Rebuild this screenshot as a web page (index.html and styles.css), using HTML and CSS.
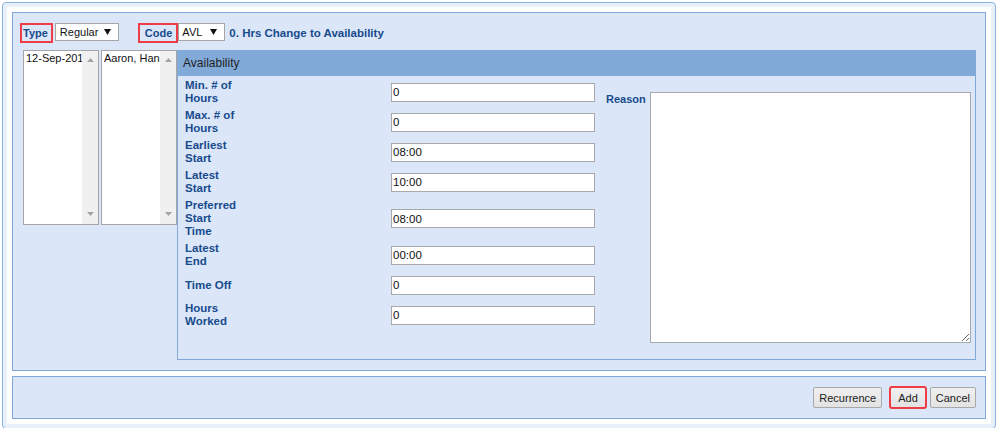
FILE: index.html
```html
<!DOCTYPE html>
<html>
<head>
<meta charset="utf-8">
<link rel="stylesheet" href="styles.css">
</head>
<body>
<div class="frame">
  <div class="inner">
    <div class="main">
      <div class="toprow">
        <span class="lbl mark type">Type</span>
        <div class="sel sel-type"><span>Regular</span><svg width="7" height="6" viewBox="0 0 7 6"><polygon points="0,0 7,0 3.5,6" fill="#111"/></svg></div>
        <span class="lbl mark code">Code</span>
        <div class="sel sel-code"><span>AVL</span><svg width="7" height="6" viewBox="0 0 7 6"><polygon points="0,0 7,0 3.5,6" fill="#111"/></svg></div>
        <span class="title">0. Hrs Change to Availability</span>
      </div>
      <div class="content">
        <div class="list">
          <div class="items">12-Sep-201</div>
          <div class="sb">
            <svg width="7" height="4" viewBox="0 0 7 4"><polygon points="0,4 7,4 3.5,0" fill="#a3a3a3"/></svg>
            <svg width="7" height="4" viewBox="0 0 7 4"><polygon points="0,0 7,0 3.5,4" fill="#a3a3a3"/></svg>
          </div>
        </div>
        <div class="list list2">
          <div class="items">Aaron, Hank</div>
          <div class="sb">
            <svg width="7" height="4" viewBox="0 0 7 4"><polygon points="0,4 7,4 3.5,0" fill="#a3a3a3"/></svg>
            <svg width="7" height="4" viewBox="0 0 7 4"><polygon points="0,0 7,0 3.5,4" fill="#a3a3a3"/></svg>
          </div>
        </div>
        <div class="avail">
          <div class="ahead">Availability</div>
          <div class="abody">
            <div class="form">
              <div class="row"><div class="flabel">Min. # of<br>Hours</div><input class="fin" type="text" value="0"></div>
              <div class="row"><div class="flabel">Max. # of<br>Hours</div><input class="fin" type="text" value="0"></div>
              <div class="row"><div class="flabel">Earliest<br>Start</div><input class="fin" type="text" value="08:00"></div>
              <div class="row"><div class="flabel">Latest<br>Start</div><input class="fin" type="text" value="10:00"></div>
              <div class="row"><div class="flabel">Preferred<br>Start<br>Time</div><input class="fin" type="text" value="08:00"></div>
              <div class="row"><div class="flabel">Latest<br>End</div><input class="fin" type="text" value="00:00"></div>
              <div class="row"><div class="flabel">Time Off</div><input class="fin" type="text" value="0"></div>
              <div class="row"><div class="flabel">Hours<br>Worked</div><input class="fin" type="text" value="0"></div>
            </div>
            <div class="reason">
              <span class="lbl rlabel">Reason</span>
              <textarea class="rtext"></textarea>
            </div>
          </div>
        </div>
      </div>
    </div>
    <div class="foot">
      <button class="btn">Recurrence</button>
      <button class="btn mark add">Add</button>
      <button class="btn cancel">Cancel</button>
    </div>
  </div>
</div>
</body>
</html>
```

FILE: styles.css
```css
html, body {
  margin: 0;
  background: #fff;
}
body {
  padding: 2px 2px 0;
  font-family: "Liberation Sans", Arial, sans-serif;
  overflow: hidden;
}
.frame {
  border: 1px solid #8cb1e0;
  border-radius: 4px;
  background: #e8f0fc;
  padding: 4px;
}
.inner {
  background: #fff;
  padding: 5px;
}
.main {
  border: 1px solid #80a8d9;
  background: #dbe6f9;
  padding: 10px 9px 10px 10px;
}
.toprow {
  display: flex;
  align-items: center;
  height: 20px;
  margin-bottom: 7px;
}
.lbl {
  font-weight: bold;
  font-size: 11px;
  color: #184b8c;
}
.mark {
  outline: 2px solid #f03c46;
}
.type, .code {
  display: inline-block;
  height: 16px;
  line-height: 16px;
}
.type {
  margin-left: -1px;
  padding: 0 3px 0 1px;
}
.code {
  margin-left: 21px;
  padding: 0 4px 0 5px;
}
.sel {
  align-self: flex-start;
  height: 18px;
  box-sizing: border-box;
  background: #fff;
  border: 1px solid #a6a6a6;
  display: flex;
  align-items: center;
  justify-content: space-between;
  padding: 0 7px 0 4px;
  font-size: 11px;
  color: #111;
}
.sel-type {
  width: 64px;
  margin-left: 4px;
}
.sel-code {
  width: 47px;
  margin-left: 2px;
  padding-left: 3px;
}
.title {
  margin-left: 4px;
  font-weight: bold;
  font-size: 11.5px;
  color: #184b8c;
}
.content {
  display: flex;
  align-items: flex-start;
}
.list {
  width: 76px;
  height: 175px;
  box-sizing: border-box;
  border: 1px solid #a5a5a5;
  background: #fff;
  display: flex;
}
.list2 {
  margin-left: 2px;
}
.items {
  flex: 1;
  min-width: 0;
  overflow: hidden;
  white-space: nowrap;
  padding: 1px 0 0 2px;
  font-size: 11px;
  line-height: 13px;
  color: #111;
}
.sb {
  width: 16px;
  background: #f0f0f0;
  display: flex;
  flex-direction: column;
  justify-content: space-between;
  align-items: center;
  padding: 7px 0 8px;
}
.avail {
  flex: 1;
}
.ahead {
  height: 26px;
  line-height: 26px;
  background: #81aad9;
  padding-left: 6px;
  font-size: 12px;
  color: #1e1e1e;
}
.abody {
  display: flex;
  align-items: flex-start;
  border: 1px solid #80a8d9;
  border-top: 0;
  padding: 1px 4px 16px 7px;
}
.form {
  width: 410px;
}
.row {
  display: flex;
  align-items: center;
  min-height: 30px;
  padding: 2px 0;
  box-sizing: border-box;
}
.flabel {
  width: 206px;
  font-weight: bold;
  font-size: 11.5px;
  line-height: 13px;
  color: #184b8c;
}
.fin {
  width: 204px;
  height: 19px;
  box-sizing: border-box;
  border: 1px solid #a9a9a9;
  padding: 0 1px;
  margin: 0;
  font-family: "Liberation Sans", Arial, sans-serif;
  font-size: 11.5px;
  color: #111;
  background: #fff;
}
.reason {
  flex: 1;
  display: flex;
  align-items: flex-start;
  margin-top: 15px;
  margin-left: 11px;
}
.rlabel {
  width: 44px;
  margin-top: 1px;
  line-height: 13px;
}
.rtext {
  flex: 1;
  height: 251px;
  box-sizing: border-box;
  border: 1px solid #a9a9a9;
  margin: 0;
  background: #fff;
  resize: both;
}
.foot {
  margin-top: 5px;
  height: 43px;
  box-sizing: border-box;
  border: 1px solid #80a8d9;
  background: #dbe6f9;
  display: flex;
  justify-content: flex-end;
  align-items: center;
  padding-right: 9px;
}
.btn {
  height: 21px;
  box-sizing: border-box;
  padding: 0 5px;
  margin: 0;
  border: 1px solid #a8a8a8;
  border-radius: 2px;
  background: linear-gradient(#f0f0f0, #e2e2e2);
  font-family: "Liberation Sans", Arial, sans-serif;
  font-size: 11px;
  color: #222;
}
.add {
  margin-left: 8px;
  padding: 0 7px;
  outline-offset: -1px;
}
.cancel {
  margin-left: 4px;
}
```
